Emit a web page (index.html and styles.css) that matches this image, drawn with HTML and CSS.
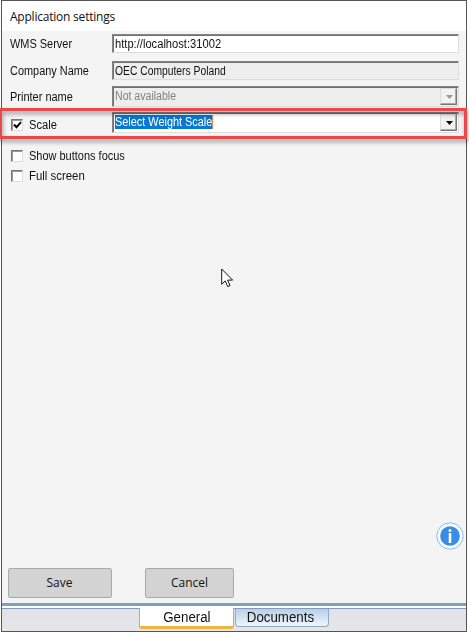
FILE: index.html
```html
<!DOCTYPE html>
<html lang="en">
<head>
<meta charset="utf-8">
<title>Application settings</title>
<link rel="stylesheet" href="styles.css">
</head>
<body>
<main class="window">
  <header class="title"><span class="t-title">Application settings</span></header>
  <section class="form">
    <div class="row server"><label><span class="t-server">WMS Server</span></label><div class="field"><span class="t-url">http://localhost:31002</span></div></div>
    <div class="row company"><label><span class="t-company">Company Name</span></label><div class="field readonly"><span class="t-oec">OEC Computers Poland</span></div></div>
    <div class="row printer"><label><span class="t-printer">Printer name</span></label><div class="field combo readonly disabled"><span class="t-na">Not available</span><i class="drop"><svg width="7" height="4" viewBox="0 0 7 4"><path d="M0 0h7L3.5 4z" fill="currentColor"/></svg></i></div></div>
    <div class="row scale"><label class="check"><i class="box"><svg width="9" height="9" viewBox="0 0 9 9"><path d="M1 3.5L3.5 6.2L8 1.2" fill="none" stroke="#000" stroke-width="2"/></svg></i><span class="t-scale">Scale</span></label><div class="field combo"><span class="selected t-select">Select Weight Scale</span><i class="drop"><svg width="7" height="4" viewBox="0 0 7 4"><path d="M0 0h7L3.5 4z" fill="currentColor"/></svg></i></div></div>
    <label class="check focus"><i class="box"></i><span class="t-focus">Show buttons focus</span></label>
    <label class="check full"><i class="box"></i><span class="t-full">Full screen</span></label>
  </section>
  <section class="space">
    <svg class="info" width="28" height="28" viewBox="0 0 28 28"><circle cx="14" cy="14" r="13.2" fill="#f8fcff" stroke="#7db5ea" stroke-width=".9"/><circle cx="14" cy="14" r="9.8" fill="#378ee2"/><circle cx="14" cy="8.4" r="1.5" fill="#fff"/><path d="M12.7 11h2.6v10h-2.6z" fill="#fff"/></svg>
  </section>
  <div class="actions"><button class="save"><span>Save</span></button><button class="cancel"><span>Cancel</span></button></div>
  <div class="divider"></div>
  <nav class="tabs"><div class="tab general"><span>General</span></div><div class="tab documents"><span>Documents</span></div></nav>
</main>
<div class="highlight"></div>
<svg class="pointer" width="13" height="20" viewBox="0 0 13 20"><path d="M.7 1v15.3l3.5-3.4 2.5 5.7 2.4-1-2.5-5.5h5z" fill="#fff" stroke="#151515"/></svg>
</body>
</html>
```
FILE: styles.css
```css
* { box-sizing: border-box; }
body { margin: 0; width: 469px; height: 633px; overflow: hidden; position: relative; background: #fff; color: #111; font: 12px/14px "Liberation Sans", Arial, sans-serif; }
.window { width: 466px; height: 632px; margin-left: 1px; border: 1px solid #555; background: #f4f4f4; display: flex; flex-direction: column; }
.title { height: 30px; flex: none; background: #fff; padding: 7px 0 0 8px; font: 12px/17px "Open Sans", sans-serif; color: #111; }
.form { height: 154px; flex: none; padding-top: 3px; }
.form span { display: inline-block; transform-origin: left center; }
.t-title { letter-spacing: -.22px; }
.form .t-server { transform: scaleX(.912); }
.form .t-company { transform: scaleX(.91); }
.form .t-printer { transform: scaleX(.915); }
.form .t-url { transform: scaleX(.93); }
.form .t-oec { transform: scaleX(.86); }
.form .t-na { transform: scaleX(.88); margin-left: 1px; }
.form .t-select { transform: scaleX(.908); }
.form .t-scale { transform: scaleX(.93); }
.form .t-focus { transform: scaleX(.915); }
.form .t-full { transform: scaleX(.95); }
.row { display: grid; grid-template-columns: 102px 347px; padding-left: 8px; height: 19px; }
.company { margin-top: 8px; }
.printer { margin-top: 6px; height: 20px; }
.scale { margin-top: 6px; height: 20px; }
.row > label { padding-top: 3px; white-space: nowrap; }
.printer > label { padding-top: 4px; }
.field { height: 100%; border: 1px solid; border-color: #858585 #ddd #ddd #858585; box-shadow: inset 1px 1px #707070; background: #fff; padding: 2px 0 0 2px; white-space: nowrap; }
.readonly { background: #eee; }
.combo { display: flex; justify-content: space-between; padding: 1px; }
.disabled { color: #808080; padding-top: 2px; }
.disabled .drop { color: #999; margin-top: -1px; }
.drop { width: 17px; height: 17px; display: grid; place-items: center; color: #000; background: #f2f2f2; border: 1px solid; border-color: #ddd #777 #777 #ddd; box-shadow: inset -1px -1px #aaa; }
.drop svg { margin: 1px 0 0 1px; }
.selected { background: #0878d3; color: #fff; height: 14px; margin: 1px 0 0 1px; border-right: 1px solid #ef945b; line-height: 15px; }
.check { display: flex; align-items: center; height: 14px; white-space: nowrap; }
.row > .check { padding: 0 0 0 1px; margin-top: 6px; }
.focus { margin: 17px 0 0 9px; }
.full { margin: 6px 0 0 9px; }
.box { width: 12px; height: 12px; margin-right: 6px; background: #fff; border: 1px solid; border-color: #777 #ddd #ddd #777; box-shadow: inset 1px 1px #999; display: grid; place-items: center; }
.space { flex: 1; display: flex; justify-content: flex-end; align-items: flex-end; padding: 0 2px 18px; }
.actions { height: 30px; flex: none; display: flex; gap: 33px; padding-left: 6px; }
button { padding: 0; border: 1px solid #a9a9a9; border-radius: 2px; background: #d3d3d3; color: #111; font: 12px/16px "Open Sans", sans-serif; }
.save { width: 104px; padding-right: 1px; }
.cancel { width: 89px; }
.divider { height: 6px; flex: none; margin-top: 5px; background: #fff; border-top: 3px solid #7e9fc4; border-bottom: 1px solid #839bb7; }
.tabs { height: 22px; flex: none; background: linear-gradient(#e2e1e7, #e6e5e9); display: flex; padding-left: 137px; gap: 1px; }
.tab { font: 14px/17px "Liberation Sans", Arial, sans-serif; display: flex; justify-content: center; white-space: nowrap; }
.tab span { transform: scaleX(.95); }
.general { width: 95px; height: 21px; margin-top: -1px; background: #fff; border: 1px solid #9cafc5; border-top: 0; border-bottom: 3px solid #efb43e; border-radius: 0 0 3px 3px; padding-top: 1px; }
.documents { width: 94px; height: 18px; background: linear-gradient(#b8cfe7, #f0f6fd); border: 1px solid #91a9c3; border-top: 0; border-radius: 0 0 4px 4px; padding-right: 4px; }
.highlight { position: absolute; left: -1px; top: 108px; width: 468px; height: 31px; border: 3px solid #ea484b; filter: drop-shadow(1px 3px 2px #0006); }
.pointer { position: absolute; left: 221px; top: 268px; }
```
